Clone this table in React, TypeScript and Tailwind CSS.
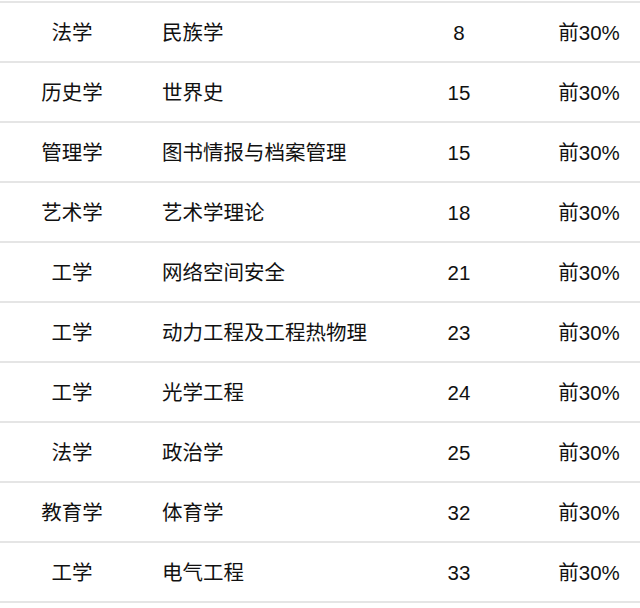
import React from "react";

const rows: [string, string, string][] = [
  ["法学", "民族学", "8"],
  ["历史学", "世界史", "15"],
  ["管理学", "图书情报与档案管理", "15"],
  ["艺术学", "艺术学理论", "18"],
  ["工学", "网络空间安全", "21"],
  ["工学", "动力工程及工程热物理", "23"],
  ["工学", "光学工程", "24"],
  ["法学", "政治学", "25"],
  ["教育学", "体育学", "32"],
  ["工学", "电气工程", "33"],
];

export default function App() {
  return (
    <div
      className="w-[640px] h-[608px] bg-white pt-px overflow-hidden text-[20.5px] text-[#111]"
      style={{ fontFamily: '"Liberation Sans", "Noto Sans CJK SC", sans-serif' }}
    >
      <div className="border-b-2 border-[#e5e5e5]">
        {rows.map((r, i) => (
          <div
            key={i}
            className="flex h-[60px] items-center pt-[3px] border-t-2 border-[#e5e5e5]"
          >
            <div className="w-[144px] text-center">{r[0]}</div>
            <div className="w-[236px] pl-[18px]">{r[1]}</div>
            <div className="w-[158px] text-center">{r[2]}</div>
            <div className="w-[102px] text-center">前30%</div>
          </div>
        ))}
      </div>
    </div>
  );
}
